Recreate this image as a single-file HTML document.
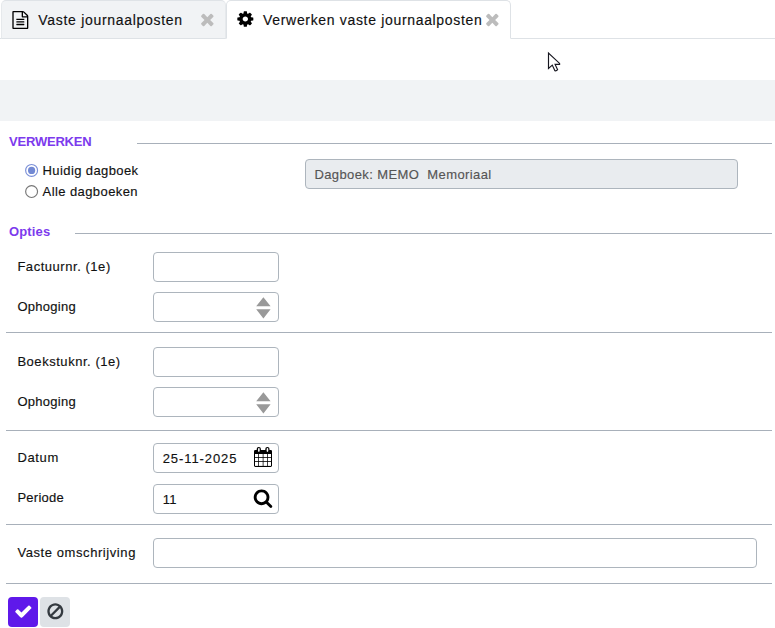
<!DOCTYPE html>
<html lang="nl">
<head>
<meta charset="utf-8">
<title>Verwerken vaste journaalposten</title>
<style>
html,body{margin:0;padding:0;background:#fff;}
body{width:775px;height:628px;position:relative;overflow:hidden;font-family:"Liberation Sans",sans-serif;color:#1a1a1a;}
.abs{position:absolute;}
.t{position:absolute;white-space:pre;line-height:16px;height:16px;font-size:13px;color:#111;-webkit-text-stroke-width:.15px;}
.tab{position:absolute;top:0;height:38px;box-sizing:border-box;border:1px solid #dee2e6;border-radius:5px 5px 0 0;}
.tabtxt{font-size:14px;letter-spacing:.61px;color:#111;}
.hd{font-weight:bold;font-size:13px;color:#7c3aed;-webkit-text-stroke-width:0;}
.line{position:absolute;height:1px;background:#a8b0ba;}
.inp{position:absolute;box-sizing:border-box;height:30px;border:1px solid #adb5bd;border-radius:4px;background:#fff;}
.radio{position:absolute;box-sizing:border-box;width:13px;height:13px;border-radius:50%;background:#fff;}
svg{position:absolute;display:block;overflow:visible;}
.btn{position:absolute;width:30px;height:30px;border-radius:4px;top:597px;}
</style>
</head>
<body>
<!-- tab strip -->
<div class="line" style="left:0;top:38px;width:775px;background:#dee2e6;"></div>
<div class="tab" style="left:1px;width:225px;background:#f1f3f5;height:39px;border-color:#dfe3e7 #e6e9ec #dee2e6 #e6e9ec;"></div>
<div class="tab" style="left:226px;width:285px;background:#fff;height:39px;border-bottom-color:#fff;"></div>

<svg style="left:10.6px;top:10.8px;" width="18.67" height="18" preserveAspectRatio="none" viewBox="0 0 1792 1792"><path fill="#000" d="M1596 380q28 28 48 76t20 88v1152q0 40-28 68t-68 28h-1344q-40 0-68-28t-28-68v-1600q0-40 28-68t68-28h896q40 0 88 20t76 48zm-444-244v376h376q-10-29-22-41l-313-313q-12-12-41-22zm384 1528v-1024h-416q-40 0-68-28t-28-68v-416h-768v1536h1280zm-1024-864q0-14 9-23t23-9h704q14 0 23 9t9 23v64q0 14-9 23t-23 9h-704q-14 0-23-9t-9-23v-64zm736 224q14 0 23 9t9 23v64q0 14-9 23t-23 9h-704q-14 0-23-9t-9-23v-64q0-14 9-23t23-9h704zm0 256q14 0 23 9t9 23v64q0 14-9 23t-23 9h-704q-14 0-23-9t-9-23v-64q0-14 9-23t23-9h704z"/></svg>
<div class="t tabtxt" style="left:38.3px;top:12px;letter-spacing:.7px;">Vaste journaalposten</div>
<svg style="left:197.7px;top:10.35px;" width="18.67" height="18.67" viewBox="0 0 1792 1792"><path fill="#bcbcbc" d="M1490 1322q0 40-28 68l-136 136q-28 28-68 28t-68-28l-294-294-294 294q-28 28-68 28t-68-28l-136-136q-28-28-28-68t28-68l294-294-294-294q-28-28-28-68t28-68l136-136q28-28 68-28t68 28l294 294 294-294q28-28 68-28t68 28l136 136q28 28 28 68t-28 68l-294 294 294 294q28 28 28 68z"/></svg>

<svg style="left:235.7px;top:10.4px;" width="18.67" height="18" preserveAspectRatio="none" viewBox="0 0 1792 1792"><path fill="#000" d="M1152 896q0-106-75-181t-181-75-181 75-75 181 75 181 181 75 181-75 75-181zm512-109v222q0 12-8 23t-20 13l-185 28q-19 54-39 91 35 50 107 138 10 12 10 25t-9 23q-27 37-99 108t-94 71q-12 0-26-9l-138-108q-44 23-91 38-16 136-29 186-7 28-36 28h-222q-14 0-24.500-8.500t-11.500-21.500l-28-184q-49-16-90-37l-141 107q-10 9-25 9-14 0-25-11-126-114-165-168-7-10-7-23 0-12 8-23 15-21 51-66.500t54-70.500q-27-50-41-99l-183-27q-13-2-21-12.500t-8-23.500v-222q0-12 8-23t19-13l186-28q14-46 39-92-40-57-107-138-10-12-10-24 0-10 9-23 26-36 98.500-107.500t94.500-71.500q13 0 26 10l138 107q44-23 91-38 16-136 29-186 7-28 36-28h222q14 0 24.500 8.500t11.500 21.500l28 184q49 16 90 37l142-107q9-9 24-9 13 0 25 10 129 119 165 170 7 8 7 22 0 12-8 23-15 21-51 66.500t-54 70.500q26 50 41 98l183 28q13 2 21 12.500t8 23.500z"/></svg>
<div class="t tabtxt" style="left:263.1px;top:12px;letter-spacing:.67px;">Verwerken vaste journaalposten</div>
<svg style="left:482.8px;top:10.35px;" width="18.67" height="18.67" viewBox="0 0 1792 1792"><path fill="#bcbcbc" d="M1490 1322q0 40-28 68l-136 136q-28 28-68 28t-68-28l-294-294-294 294q-28 28-68 28t-68-28l-136-136q-28-28-28-68t28-68l294-294-294-294q-28-28-28-68t28-68l136-136q28-28 68-28t68 28l294 294 294-294q28-28 68-28t68 28l136 136q28 28 28 68t-28 68l-294 294 294 294q28 28 28 68z"/></svg>

<!-- mouse cursor -->
<svg style="left:540px;top:45px;" width="30" height="32" viewBox="540 45 30 32"><path d="M548.5 53.1 L548.5 68.4 L552.3 65.1 L554.9 70.8 Q556.4 71.3 557.6 69.7 L555.1 64.4 L559.6 64.4 L559.6 63.4 Z" fill="#fff" stroke="#16161f" stroke-width="1.15" stroke-linejoin="miter"/></svg>

<!-- grey toolbar -->
<div class="abs" style="left:0;top:80px;width:775px;height:41px;background:#f1f3f5;"></div>

<!-- VERWERKEN -->
<div class="t hd" style="left:9px;top:134px;letter-spacing:-.2px;">VERWERKEN</div>
<div class="line" style="left:137px;top:143px;width:635px;"></div>

<svg style="left:24px;top:163px;" width="15" height="15" viewBox="0 0 15 15"><circle cx="7.6" cy="7.4" r="5.95" fill="#fff" stroke="#7a8fd8" stroke-width="1.15"/><circle cx="7.6" cy="7.4" r="3.6" fill="#7289d3"/></svg>
<div class="t" style="left:42.6px;top:163px;letter-spacing:.39px;">Huidig dagboek</div>
<svg style="left:24px;top:184px;" width="15" height="15" viewBox="0 0 15 15"><circle cx="7.6" cy="7.5" r="5.95" fill="#fff" stroke="#767676" stroke-width="1.15"/></svg>
<div class="t" style="left:42.6px;top:184px;letter-spacing:.41px;">Alle dagboeken</div>

<div class="inp" style="left:305px;top:159px;width:433px;background:#e9ecef;border-color:#adb5bd;"></div>
<div class="t" style="left:314.4px;top:167px;letter-spacing:.40px;color:#555;">Dagboek: MEMO  Memoriaal</div>

<!-- Opties -->
<div class="t hd" style="left:9px;top:224px;letter-spacing:.15px;">Opties</div>
<div class="line" style="left:75px;top:233px;width:697px;"></div>

<div class="t" style="left:17.4px;top:259px;letter-spacing:.54px;">Factuurnr. (1e)</div>
<div class="inp" style="left:153px;top:252px;width:126px;"></div>
<div class="t" style="left:17.4px;top:299px;letter-spacing:.28px;">Ophoging</div>
<div class="inp" style="left:153px;top:292px;width:126px;"></div>
<svg style="left:255px;top:295px;" width="18" height="26" viewBox="255 295 18 26"><path fill="#999" d="M263.4 297.2 L270.6 306.3 L256.2 306.3 Z M256.2 309.2 L270.6 309.2 L263.4 318.5 Z"/></svg>

<div class="line" style="left:6px;top:332px;width:766px;"></div>

<div class="t" style="left:17.4px;top:354px;letter-spacing:.54px;">Boekstuknr. (1e)</div>
<div class="inp" style="left:153px;top:347px;width:126px;"></div>
<div class="t" style="left:17.4px;top:394px;letter-spacing:.28px;">Ophoging</div>
<div class="inp" style="left:153px;top:387px;width:126px;"></div>
<svg style="left:255px;top:390px;" width="18" height="26" viewBox="255 295 18 26"><path fill="#999" d="M263.4 297.2 L270.6 306.3 L256.2 306.3 Z M256.2 309.2 L270.6 309.2 L263.4 318.5 Z"/></svg>

<div class="line" style="left:6px;top:430px;width:766px;"></div>

<div class="t" style="left:17.4px;top:450px;letter-spacing:.66px;">Datum</div>
<div class="inp" style="left:153px;top:443px;width:126px;"></div>
<div class="t" style="left:162.7px;top:451px;letter-spacing:.91px;">25-11-2025</div>
<svg style="left:250px;top:444px;" width="26" height="26" viewBox="250 444 26 26"><rect x="254" y="449.9" width="18" height="17" rx="1.3" fill="#000"/><rect x="256.7" y="446.9" width="4.2" height="5.5" rx="2" fill="#000"/><rect x="258.05" y="447.9" width="1.6" height="4" rx=".8" fill="#fff"/><rect x="265.3" y="446.9" width="4.2" height="5.5" rx="2" fill="#000"/><rect x="266.65" y="447.9" width="1.6" height="4" rx=".8" fill="#fff"/><rect x="255" y="454" width="3.22" height="3.10" fill="#fff"/><rect x="255" y="457.9" width="3.22" height="3.10" fill="#fff"/><rect x="255" y="461.8" width="3.22" height="4.10" fill="#fff"/><rect x="258.97" y="454" width="3.75" height="3.10" fill="#fff"/><rect x="258.97" y="457.9" width="3.75" height="3.10" fill="#fff"/><rect x="258.97" y="461.8" width="3.75" height="4.10" fill="#fff"/><rect x="263.47" y="454" width="3.75" height="3.10" fill="#fff"/><rect x="263.47" y="457.9" width="3.75" height="3.10" fill="#fff"/><rect x="263.47" y="461.8" width="3.75" height="4.10" fill="#fff"/><rect x="267.97" y="454" width="3.03" height="3.10" fill="#fff"/><rect x="267.97" y="457.9" width="3.03" height="3.10" fill="#fff"/><rect x="267.97" y="461.8" width="3.03" height="4.10" fill="#fff"/></svg>

<div class="t" style="left:17.4px;top:490px;letter-spacing:.26px;">Periode</div>
<div class="inp" style="left:153px;top:484px;width:126px;"></div>
<div class="t" style="left:162.7px;top:492px;letter-spacing:.40px;">11</div>
<svg style="left:253.3px;top:488.1px;" width="20" height="20" viewBox="0 0 1792 1792"><path fill="#000" d="M1216 832q0-185-131.500-316.500t-316.500-131.500-316.500 131.500-131.500 316.500 131.500 316.500 316.500 131.500 316.500-131.500 131.500-316.500zm512 832q0 52-38 90t-90 38q-54 0-90-38l-343-342q-179 124-399 124-143 0-273.500-55.500t-225-150-150-225-55.500-273.500 55.500-273.500 150-225 225-150 273.500-55.500 273.500 55.500 225 150 150 225 55.500 273.500q0 220-124 399l343 343q37 37 37 90z"/></svg>

<div class="line" style="left:6px;top:524px;width:766px;"></div>

<div class="t" style="left:17.4px;top:545px;letter-spacing:.58px;">Vaste omschrijving</div>
<div class="inp" style="left:153px;top:538px;width:604px;"></div>

<div class="line" style="left:6px;top:583px;width:766px;"></div>

<!-- buttons -->
<div class="btn" style="left:8px;background:#5f19ea;"></div>
<svg style="left:13.87px;top:601.75px;" width="18.67" height="18.67" viewBox="0 0 1792 1792"><path fill="#fff" d="M1671 566q0 40-28 68l-724 724-136 136q-28 28-68 28t-68-28l-136-136-362-362q-28-28-28-68t28-68l136-136q28-28 68-28t68 28l294 295 656-657q28-28 68-28t68 28l136 136q28 28 28 68z"/></svg>
<div class="btn" style="left:40px;background:#dee2e6;"></div>
<svg style="left:45.7px;top:602.15px;" width="18.67" height="18.67" viewBox="0 0 1792 1792"><path fill="#343a40" d="M1440 893q0-161-87-295l-754 753q137 89 297 89 111 0 211.500-43.500t173.500-116.500 116-174.500 43-212.500zm-999 299l755-754q-135-91-300-91-148 0-273 73t-198 199-73 274q0 162 89 299zm1223-299q0 157-61 300t-163.500 246-245 164-298.500 61-298.500-61-245-164-163.500-246-61-300 61-299.500 163.500-245.500 245-164 298.500-61 298.500 61 245 164 163.500 245.500 61 299.500z"/></svg>
</body>
</html>
